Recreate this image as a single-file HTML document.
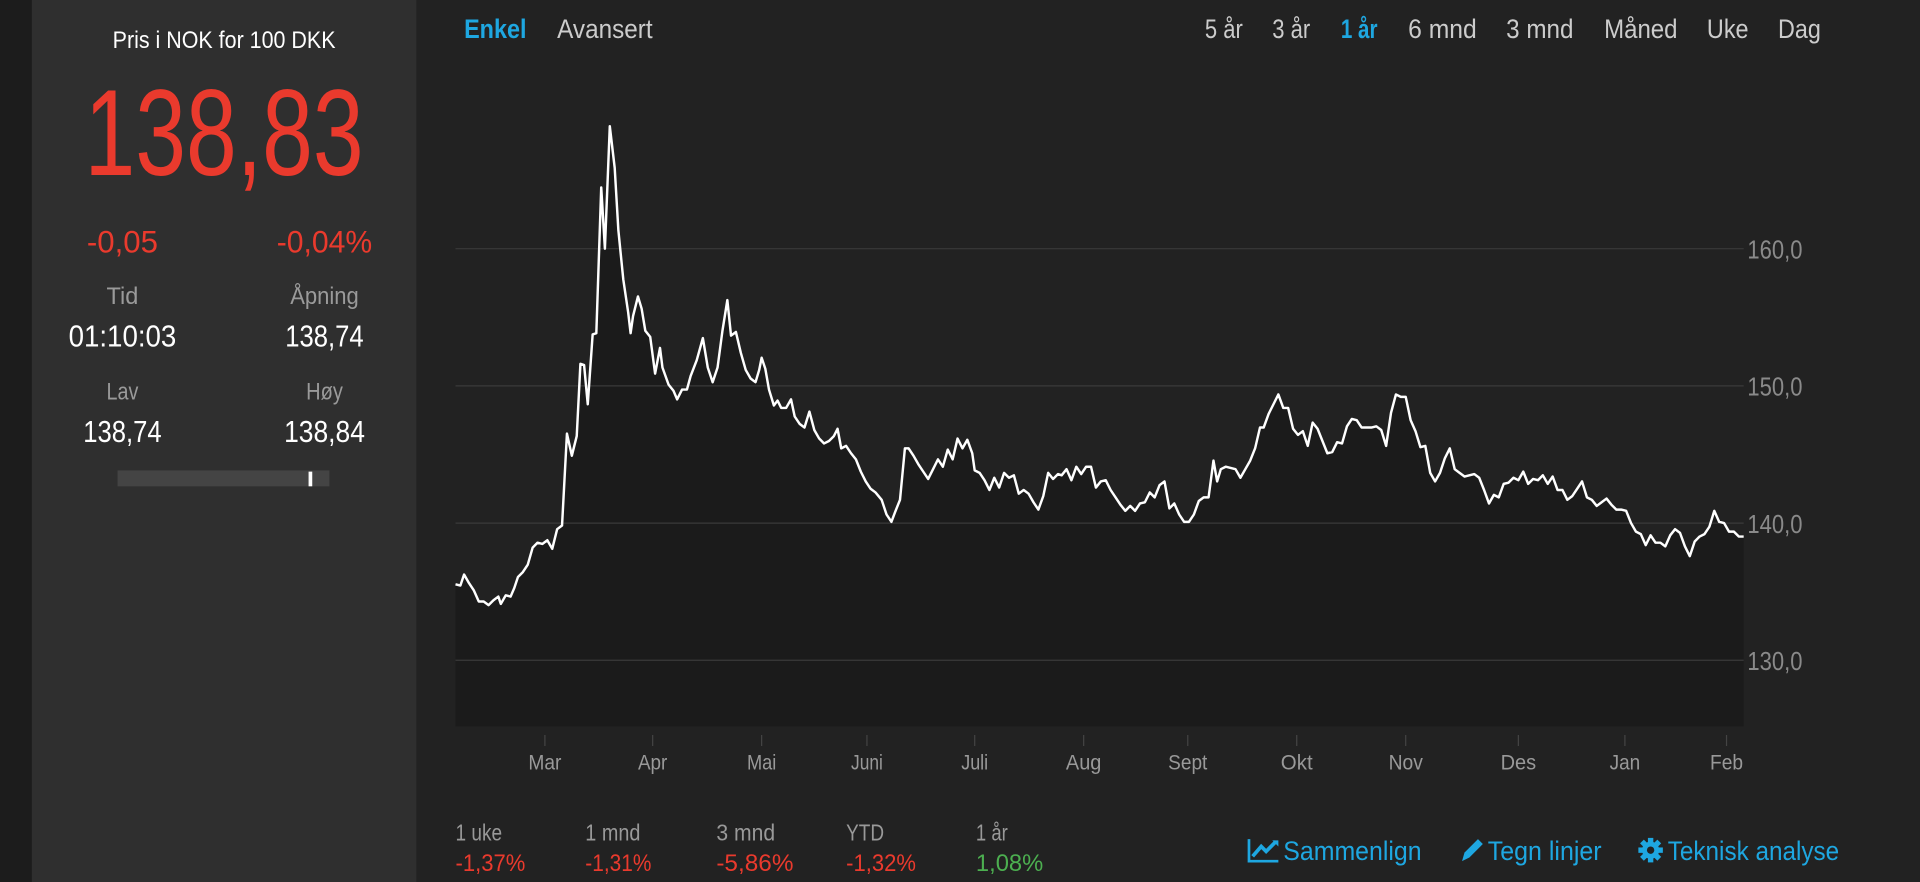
<!DOCTYPE html>
<html><head><meta charset="utf-8"><style>
html,body{margin:0;padding:0;background:#222;overflow:hidden}
svg{display:block}
text{font-family:"Liberation Sans Narrow","Liberation Sans",sans-serif}
</style></head><body>
<svg width="1920" height="882" viewBox="0 0 1568 720" preserveAspectRatio="none" xmlns="http://www.w3.org/2000/svg">
<rect x="0" y="0" width="1568" height="720" fill="#222"/>
<rect x="0" y="0" width="26" height="720" fill="#1c1c1c"/>
<rect x="26" y="0" width="314" height="720" fill="#2f2f2f"/>

<!-- left panel -->
<text x="183" y="39" fill="#fff" font-size="20" text-anchor="middle" textLength="182" lengthAdjust="spacingAndGlyphs">Pris i NOK for 100 DKK</text>
<text x="183" y="143" fill="#ea3a2d" font-size="100" text-anchor="middle" textLength="228" lengthAdjust="spacingAndGlyphs">138,83</text>
<text x="100" y="206" fill="#ea3a2d" font-size="26" text-anchor="middle" textLength="58" lengthAdjust="spacingAndGlyphs">-0,05</text>
<text x="265" y="206" fill="#ea3a2d" font-size="26" text-anchor="middle" textLength="78" lengthAdjust="spacingAndGlyphs">-0,04%</text>
<text x="100" y="248" fill="#9a9a9a" font-size="20" text-anchor="middle" textLength="26" lengthAdjust="spacingAndGlyphs">Tid</text>
<text x="265" y="248" fill="#9a9a9a" font-size="20" text-anchor="middle" textLength="56" lengthAdjust="spacingAndGlyphs">Åpning</text>
<text x="100" y="283" fill="#fff" font-size="25" text-anchor="middle" textLength="88" lengthAdjust="spacingAndGlyphs">01:10:03</text>
<text x="265" y="283" fill="#fff" font-size="25" text-anchor="middle" textLength="64" lengthAdjust="spacingAndGlyphs">138,74</text>
<text x="100" y="326" fill="#9a9a9a" font-size="20" text-anchor="middle" textLength="26" lengthAdjust="spacingAndGlyphs">Lav</text>
<text x="265" y="326" fill="#9a9a9a" font-size="20" text-anchor="middle" textLength="30" lengthAdjust="spacingAndGlyphs">Høy</text>
<text x="100" y="361" fill="#fff" font-size="25" text-anchor="middle" textLength="64" lengthAdjust="spacingAndGlyphs">138,74</text>
<text x="265" y="361" fill="#fff" font-size="25" text-anchor="middle" textLength="66" lengthAdjust="spacingAndGlyphs">138,84</text>
<rect x="96" y="384" width="173" height="13" fill="#444"/>
<rect x="252" y="385" width="3" height="12" fill="#fff"/>

<!-- top tabs -->
<text x="379" y="31" fill="#1ea7e1" font-size="22" font-weight="bold" textLength="51" lengthAdjust="spacingAndGlyphs">Enkel</text>
<text x="455" y="31" fill="#ccc" font-size="22" textLength="78" lengthAdjust="spacingAndGlyphs">Avansert</text>
<g font-size="22" fill="#ccc">
<text x="984" y="31" textLength="31" lengthAdjust="spacingAndGlyphs">5 år</text>
<text x="1039" y="31" textLength="31" lengthAdjust="spacingAndGlyphs">3 år</text>
<text x="1095" y="31" fill="#1ea7e1" font-weight="bold" textLength="30" lengthAdjust="spacingAndGlyphs">1 år</text>
<text x="1150" y="31" textLength="56" lengthAdjust="spacingAndGlyphs">6 mnd</text>
<text x="1230" y="31" textLength="55" lengthAdjust="spacingAndGlyphs">3 mnd</text>
<text x="1310" y="31" textLength="60" lengthAdjust="spacingAndGlyphs">Måned</text>
<text x="1394" y="31" textLength="34" lengthAdjust="spacingAndGlyphs">Uke</text>
<text x="1452" y="31" textLength="35" lengthAdjust="spacingAndGlyphs">Dag</text>
</g>

<!-- chart -->
<polygon fill="#1b1b1b" points="372,593 372,477 376,478 379,469 383,476 387,482 391,491 395,491 399,494 403,490 407,487 409,493 413,486 417,487 420,480 423,471 427,467 431,461 435,447 439,443 443,444 447,441 451,448 455,432 459,429 463,354 467,372 471,356 474,297 477,298 480,330 484,273 487,272 491,153 494,203 498,103 502,137 505,188 509,228 513,255 515,272 517,258 521,242 524,252 527,270 531,275 535,305 539,284 541,300 546,314 550,319 553,326 557,318 561,318 564,307 569,294 574,276 578,300 582,312 586,300 590,270 594,245 597,274 601,271 605,288 609,302 613,309 617,312 620,302 622,292 625,301 628,318 632,331 635,327 638,333 642,333 646,326 649,340 653,346 657,349 661,336 665,351 669,358 673,362 677,360 681,356 684,350 687,366 691,364 695,370 699,375 703,385 707,393 711,399 715,402 720,408 724,420 728,426 731,418 735,408 739,366 742,366 746,372 750,379 754,385 758,391 762,383 766,375 770,381 774,367 778,375 782,358 786,366 790,359 794,370 796,384 800,386 804,392 808,400 812,390 816,398 820,386 824,390 828,388 832,403 836,400 840,403 844,410 848,416 852,405 856,386 860,391 864,387 867,388 871,383 875,392 879,381 883,387 887,381 891,381 895,398 899,393 903,392 907,400 911,406 915,412 919,417 923,413 927,417 931,411 935,410 939,402 943,406 947,396 951,393 955,415 959,411 963,420 967,426 971,426 975,420 979,409 983,406 987,406 991,376 994,393 997,383 1001,381 1005,382 1009,383 1013,390 1017,383 1021,376 1025,366 1029,349 1032,349 1036,338 1040,330 1044,322 1048,333 1052,333 1056,350 1060,355 1064,352 1068,364 1072,345 1076,350 1080,360 1084,370 1088,369 1092,361 1096,362 1100,348 1104,342 1108,343 1112,349 1116,349 1120,349 1124,348 1128,351 1132,364 1136,337 1140,322 1144,324 1148,324 1152,343 1156,352 1160,365 1164,364 1168,386 1172,393 1176,386 1180,374 1184,366 1188,383 1192,386 1196,389 1200,388 1204,387 1208,390 1212,400 1216,411 1220,404 1224,406 1228,395 1232,394 1236,390 1240,392 1244,385 1248,395 1252,391 1256,392 1260,388 1264,395 1268,389 1272,400 1276,400 1280,408 1284,405 1288,399 1292,393 1296,406 1300,408 1304,413 1308,410 1312,407 1316,412 1320,416 1324,416 1328,417 1332,427 1336,434 1340,436 1344,445 1348,437 1352,443 1356,443 1360,446 1364,437 1368,432 1372,435 1376,446 1380,454 1384,442 1388,438 1392,436 1396,430 1400,417 1404,426 1408,427 1412,434 1416,434 1420,438 1424,438 1424,593"/>
<g stroke="#3a3a3a" stroke-width="1">
<line x1="372" y1="203" x2="1424" y2="203"/>
<line x1="372" y1="315" x2="1424" y2="315"/>
<line x1="372" y1="427" x2="1424" y2="427"/>
<line x1="372" y1="539" x2="1424" y2="539"/>
</g>
<polyline fill="none" stroke="#fff" stroke-width="2" stroke-linejoin="round" points="372,477 376,478 379,469 383,476 387,482 391,491 395,491 399,494 403,490 407,487 409,493 413,486 417,487 420,480 423,471 427,467 431,461 435,447 439,443 443,444 447,441 451,448 455,432 459,429 463,354 467,372 471,356 474,297 477,298 480,330 484,273 487,272 491,153 494,203 498,103 502,137 505,188 509,228 513,255 515,272 517,258 521,242 524,252 527,270 531,275 535,305 539,284 541,300 546,314 550,319 553,326 557,318 561,318 564,307 569,294 574,276 578,300 582,312 586,300 590,270 594,245 597,274 601,271 605,288 609,302 613,309 617,312 620,302 622,292 625,301 628,318 632,331 635,327 638,333 642,333 646,326 649,340 653,346 657,349 661,336 665,351 669,358 673,362 677,360 681,356 684,350 687,366 691,364 695,370 699,375 703,385 707,393 711,399 715,402 720,408 724,420 728,426 731,418 735,408 739,366 742,366 746,372 750,379 754,385 758,391 762,383 766,375 770,381 774,367 778,375 782,358 786,366 790,359 794,370 796,384 800,386 804,392 808,400 812,390 816,398 820,386 824,390 828,388 832,403 836,400 840,403 844,410 848,416 852,405 856,386 860,391 864,387 867,388 871,383 875,392 879,381 883,387 887,381 891,381 895,398 899,393 903,392 907,400 911,406 915,412 919,417 923,413 927,417 931,411 935,410 939,402 943,406 947,396 951,393 955,415 959,411 963,420 967,426 971,426 975,420 979,409 983,406 987,406 991,376 994,393 997,383 1001,381 1005,382 1009,383 1013,390 1017,383 1021,376 1025,366 1029,349 1032,349 1036,338 1040,330 1044,322 1048,333 1052,333 1056,350 1060,355 1064,352 1068,364 1072,345 1076,350 1080,360 1084,370 1088,369 1092,361 1096,362 1100,348 1104,342 1108,343 1112,349 1116,349 1120,349 1124,348 1128,351 1132,364 1136,337 1140,322 1144,324 1148,324 1152,343 1156,352 1160,365 1164,364 1168,386 1172,393 1176,386 1180,374 1184,366 1188,383 1192,386 1196,389 1200,388 1204,387 1208,390 1212,400 1216,411 1220,404 1224,406 1228,395 1232,394 1236,390 1240,392 1244,385 1248,395 1252,391 1256,392 1260,388 1264,395 1268,389 1272,400 1276,400 1280,408 1284,405 1288,399 1292,393 1296,406 1300,408 1304,413 1308,410 1312,407 1316,412 1320,416 1324,416 1328,417 1332,427 1336,434 1340,436 1344,445 1348,437 1352,443 1356,443 1360,446 1364,437 1368,432 1372,435 1376,446 1380,454 1384,442 1388,438 1392,436 1396,430 1400,417 1404,426 1408,427 1412,434 1416,434 1420,438 1424,438"/>

<g fill="#8a8a8a" font-size="21">
<text x="1427" y="211" textLength="45" lengthAdjust="spacingAndGlyphs">160,0</text>
<text x="1427" y="323" textLength="45" lengthAdjust="spacingAndGlyphs">150,0</text>
<text x="1427" y="435" textLength="45" lengthAdjust="spacingAndGlyphs">140,0</text>
<text x="1427" y="547" textLength="45" lengthAdjust="spacingAndGlyphs">130,0</text>
</g>

<g stroke="#444" stroke-width="1">
<line x1="445" y1="600" x2="445" y2="609"/><line x1="533" y1="600" x2="533" y2="609"/><line x1="622" y1="600" x2="622" y2="609"/><line x1="708" y1="600" x2="708" y2="609"/><line x1="796" y1="600" x2="796" y2="609"/><line x1="885" y1="600" x2="885" y2="609"/><line x1="970" y1="600" x2="970" y2="609"/><line x1="1059" y1="600" x2="1059" y2="609"/><line x1="1148" y1="600" x2="1148" y2="609"/><line x1="1240" y1="600" x2="1240" y2="609"/><line x1="1327" y1="600" x2="1327" y2="609"/><line x1="1410" y1="600" x2="1410" y2="609"/>
</g>
<g fill="#999" font-size="17" text-anchor="middle">
<text x="445" y="628" textLength="27" lengthAdjust="spacingAndGlyphs">Mar</text>
<text x="533" y="628" textLength="24" lengthAdjust="spacingAndGlyphs">Apr</text>
<text x="622" y="628" textLength="24" lengthAdjust="spacingAndGlyphs">Mai</text>
<text x="708" y="628" textLength="26" lengthAdjust="spacingAndGlyphs">Juni</text>
<text x="796" y="628" textLength="22" lengthAdjust="spacingAndGlyphs">Juli</text>
<text x="885" y="628" textLength="29" lengthAdjust="spacingAndGlyphs">Aug</text>
<text x="970" y="628" textLength="32" lengthAdjust="spacingAndGlyphs">Sept</text>
<text x="1059" y="628" textLength="26" lengthAdjust="spacingAndGlyphs">Okt</text>
<text x="1148" y="628" textLength="28" lengthAdjust="spacingAndGlyphs">Nov</text>
<text x="1240" y="628" textLength="29" lengthAdjust="spacingAndGlyphs">Des</text>
<text x="1327" y="628" textLength="25" lengthAdjust="spacingAndGlyphs">Jan</text>
<text x="1410" y="628" textLength="27" lengthAdjust="spacingAndGlyphs">Feb</text>
</g>

<!-- bottom stats -->
<g fill="#999" font-size="19">
<text x="372" y="686" textLength="38" lengthAdjust="spacingAndGlyphs">1 uke</text>
<text x="478" y="686" textLength="45" lengthAdjust="spacingAndGlyphs">1 mnd</text>
<text x="585" y="686" textLength="48" lengthAdjust="spacingAndGlyphs">3 mnd</text>
<text x="691" y="686" textLength="31" lengthAdjust="spacingAndGlyphs">YTD</text>
<text x="797" y="686" textLength="26" lengthAdjust="spacingAndGlyphs">1 år</text>
</g>
<g fill="#ea3a2d" font-size="20">
<text x="372" y="711" textLength="57" lengthAdjust="spacingAndGlyphs">-1,37%</text>
<text x="478" y="711" textLength="54" lengthAdjust="spacingAndGlyphs">-1,31%</text>
<text x="585" y="711" textLength="63" lengthAdjust="spacingAndGlyphs">-5,86%</text>
<text x="691" y="711" textLength="57" lengthAdjust="spacingAndGlyphs">-1,32%</text>
<text x="797" y="711" fill="#4caf50" textLength="55" lengthAdjust="spacingAndGlyphs">1,08%</text>
</g>

<!-- links -->
<g fill="#1ea7e1" font-size="22">
<text x="1048" y="702" textLength="113" lengthAdjust="spacingAndGlyphs">Sammenlign</text>
<text x="1215" y="702" textLength="93" lengthAdjust="spacingAndGlyphs">Tegn linjer</text>
<text x="1362" y="702" textLength="140" lengthAdjust="spacingAndGlyphs">Teknisk analyse</text>
</g>
<g stroke="#1ea7e1" fill="none" stroke-width="2.2">
<path d="M1020,685 V703 H1044"/>
<path d="M1023,699 L1030,691 L1034,695 L1042,687" stroke-width="3"/>
</g>
<path d="M1039,686 L1044,686 L1044,691 Z" fill="#1ea7e1"/>
<path d="M1194,703 L1196,696 L1207,685 L1211,689 L1200,700 Z" fill="#1ea7e1"/>
<g fill="#1ea7e1" transform="translate(1348,694)">
<circle r="7"/>
<rect x="-2.2" y="-10" width="4.4" height="20"/>
<rect x="-2.2" y="-10" width="4.4" height="20" transform="rotate(45)"/>
<rect x="-2.2" y="-10" width="4.4" height="20" transform="rotate(90)"/>
<rect x="-2.2" y="-10" width="4.4" height="20" transform="rotate(135)"/>
<circle r="3" fill="#222"/>
</g>
</svg>
</body></html>
